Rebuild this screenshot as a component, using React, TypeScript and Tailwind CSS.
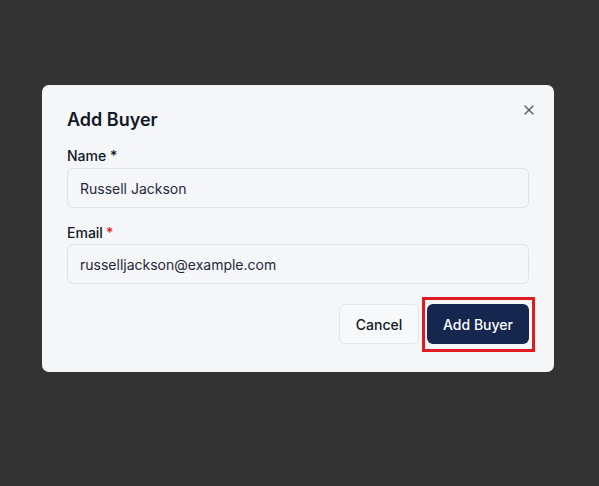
import React from "react";

export default function App() {
  return (
    <div className="w-[599px] h-[486px] bg-[#333333] overflow-hidden" style={{ fontFamily: "Inter, 'Noto Sans', sans-serif" }}>
      <div className="ml-[42px] mt-[85px] w-[512px] h-[287px] rounded-[7px] bg-[#f5f6f8] px-[25px] pt-[21px] relative">
        <button className="absolute right-[17px] top-[17px] w-4 h-4 flex items-center justify-center text-[#5b5f66]">
          <svg width="16" height="16" viewBox="0 0 24 24" fill="none" stroke="currentColor" strokeWidth="2" strokeLinecap="round" strokeLinejoin="round">
            <path d="M18 6 6 18" />
            <path d="m6 6 12 12" />
          </svg>
        </button>
        <h2 className="text-lg leading-7 font-semibold text-[#111827]">Add Buyer</h2>
        <label className="block mt-[12px] text-sm leading-5 font-medium text-[#111827]">Name *</label>
        <div className="mt-[2px] h-10 rounded-[6px] border border-[#e0e2e6] px-3 pt-px flex items-center text-sm text-[#1e2939]">
          Russell Jackson
        </div>
        <label className="block mt-[15px] text-sm leading-5 font-medium text-[#111827]">
          Email<span className="text-[#e11d2a] ml-[3px]">*</span>
        </label>
        <div className="mt-px h-10 rounded-[6px] border border-[#e0e2e6] px-3 pt-px flex items-center text-sm text-[#1e2939]">
          russelljackson@example.com
        </div>
        <div className="mt-5 flex justify-end gap-2">
          <button className="h-10 w-20 pt-px rounded-[6px] border border-[#e3e5e9] bg-[#f7f8fa] text-sm font-medium text-[#111827]">
            Cancel
          </button>
          <div className="relative">
            <button className="h-10 w-[102px] pt-px rounded-[6px] bg-[#15264f] text-sm font-medium text-white">
              Add Buyer
            </button>
            <span className="absolute left-[-5px] top-[-7px] w-[113px] h-[55px] border-[3px] border-[#e21b23] pointer-events-none" />
          </div>
        </div>
      </div>
    </div>
  );
}
